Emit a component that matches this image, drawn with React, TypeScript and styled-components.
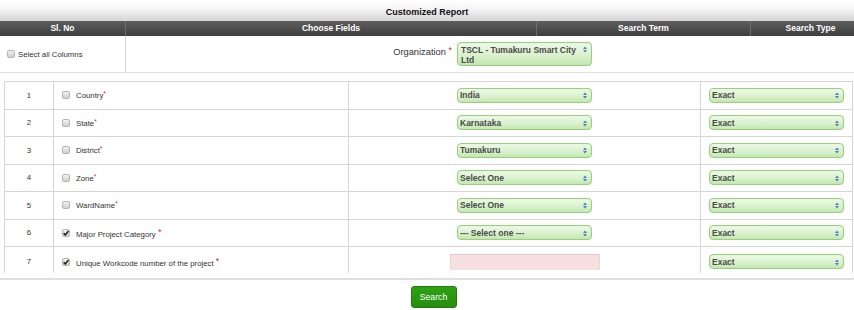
import React from 'react';
import styled, { createGlobalStyle } from 'styled-components';

const GlobalStyle = createGlobalStyle`
  html, body {
    margin: 0;
    padding: 0;
    background: #ffffff;
    font-family: "Liberation Sans", Arial, sans-serif;
    color: #333;
  }
`;

type Row = {
  no: number;
  label: string;
  checked: boolean;
  spacedStar: boolean;
  term: string | null;
};

const ROWS: Row[] = [
  { no: 1, label: 'Country', checked: false, spacedStar: false, term: 'India' },
  { no: 2, label: 'State', checked: false, spacedStar: false, term: 'Karnataka' },
  { no: 3, label: 'District', checked: false, spacedStar: false, term: 'Tumakuru' },
  { no: 4, label: 'Zone', checked: false, spacedStar: false, term: 'Select One' },
  { no: 5, label: 'WardName', checked: false, spacedStar: false, term: 'Select One' },
  { no: 6, label: 'Major Project Category', checked: true, spacedStar: true, term: '--- Select one ---' },
  { no: 7, label: 'Unique Workcode number of the project', checked: true, spacedStar: true, term: null },
];

const Arrows: React.FC = () => (
  <ArrowSvg width="4" height="7" viewBox="0 0 4 7">
    <polygon points="0,3 2,0.6 4,3" fill="#4a7cc0" />
    <polygon points="0,4 2,6.4 4,4" fill="#4a7cc0" />
  </ArrowSvg>
);

const Check: React.FC<{ checked?: boolean }> = ({ checked }) => (
  <Box>
    {checked && (
      <svg width="8" height="8" viewBox="0 0 8 8">
        <path d="M1.6 4.2 L3.3 5.9 L6.5 2" stroke="#1e1e1e" strokeWidth="1.5" fill="none" />
      </svg>
    )}
  </Box>
);

const FakeSelect: React.FC<{ value: string; tall?: boolean }> = ({ value, tall }) => (
  <SelectBox $tall={tall}>
    <SelectText>{value}</SelectText>
    <Arrows />
  </SelectBox>
);

const App: React.FC = () => {
  return (
    <>
      <GlobalStyle />
      <Page>
        <TitleBar>Customized Report</TitleBar>
        <HeadRow>
          <HeadCell>Sl. No</HeadCell>
          <HeadCell>Choose Fields</HeadCell>
          <HeadCell>Search Term</HeadCell>
          <HeadCell $last>Search Type</HeadCell>
        </HeadRow>
        <TopSection>
          <SelectAll>
            <Check />
            <span>Select all Columns</span>
          </SelectAll>
          <OrgCell>
            <OrgLabel>
              Organization <Star>*</Star>
            </OrgLabel>
            <FakeSelect value="TSCL - Tumakuru Smart City Ltd" tall />
          </OrgCell>
        </TopSection>

        <Table>
          {ROWS.map((row) => (
            <TableRow key={row.no} $tall={row.no === 7}>
              <NoCell>{row.no}</NoCell>
              <FieldCell>
                <Check checked={row.checked} />
                <FieldLabel>
                  {row.label}
                  {row.spacedStar ? (
                    <>
                      {' '}
                      <Star>*</Star>
                    </>
                  ) : (
                    <SmallStar>*</SmallStar>
                  )}
                </FieldLabel>
              </FieldCell>
              <TermCell>
                {row.term ? <FakeSelect value={row.term} /> : <TextInput />}
              </TermCell>
              <TypeCell>
                <FakeSelect value="Exact" />
              </TypeCell>
            </TableRow>
          ))}
        </Table>

        <Footer>
          <SearchButton>Search</SearchButton>
        </Footer>
      </Page>
    </>
  );
};

export default App;

const Page = styled.div`
  width: 854px;
  height: 310px;
  overflow: hidden;
`;

const TitleBar = styled.div`
  height: 21px;
  line-height: 25px;
  text-align: center;
  font-size: 9px;
  font-weight: bold;
  color: #111;
  background: linear-gradient(#ffffff, #f6f6f6 40%, #d4d4d4);
`;

const HeadRow = styled.div`
  display: grid;
  grid-template-columns: 126px 411px 214px 1fr;
  height: 15px;
  background: linear-gradient(#5e5e5e, #3e3e3e);
`;

const HeadCell = styled.div<{ $last?: boolean }>`
  color: #fff;
  font-size: 8.5px;
  font-weight: bold;
  text-align: center;
  line-height: 15px;
  padding-left: ${(p) => (p.$last ? '16px' : '0')};
  border-right: ${(p) => (p.$last ? 'none' : '1px solid #6c6c6c')};
`;

const TopSection = styled.div`
  display: grid;
  grid-template-columns: 126px 1fr;
  height: 37px;
  border-bottom: 1px solid #dedede;
  box-sizing: border-box;
`;

const SelectAll = styled.label`
  display: flex;
  align-items: center;
  gap: 3px;
  padding-left: 7px;
  font-size: 7.8px;
  color: #333;
  border-right: 1px solid #d6d6d6;
`;

const OrgCell = styled.div`
  display: flex;
  align-items: flex-start;
  padding-top: 6px;
`;

const OrgLabel = styled.div`
  width: 331px;
  text-align: right;
  font-size: 9.3px;
  color: #333;
  padding-top: 3px;
  padding-right: 5px;
  box-sizing: border-box;
`;

const Star = styled.span`
  color: #e02424;
  font-size: 9px;
  vertical-align: 2px;
`;

const SmallStar = styled.span`
  color: #e02424;
  font-size: 6.5px;
  vertical-align: 2px;
`;

const SelectBox = styled.div<{ $tall?: boolean }>`
  width: 135px;
  height: ${(p) => (p.$tall ? '24px' : '15px')};
  box-sizing: border-box;
  display: flex;
  align-items: ${(p) => (p.$tall ? 'flex-start' : 'center')};
  justify-content: space-between;
  padding: ${(p) => (p.$tall ? '2px 4px 0 3px' : '0 4px 0 2px')};
  border: 1px solid #96d17c;
  border-radius: 4px;
  background: linear-gradient(#eef9e8, #dcf2d0 50%, #c4e8b2);
  box-shadow: inset 0 0 1px #b8e2a4;
`;

const SelectText = styled.span`
  font-size: 8.5px;
  font-weight: bold;
  color: #4a4a4a;
  line-height: 10px;
  max-width: 120px;
`;

const ArrowSvg = styled.svg`
  flex: none;
  margin-top: 1px;
`;

const Table = styled.div`
  margin: 8px 1px 0 4px;
  height: 192px;
  overflow: hidden;
  border-top: 1px solid #d6d6d6;
  border-left: 1px solid #d6d6d6;
  border-right: 1px solid #d6d6d6;
  box-sizing: border-box;
`;

const TableRow = styled.div<{ $tall?: boolean }>`
  display: grid;
  grid-template-columns: 49px 295px 352px 1fr;
  height: ${(p) => (p.$tall ? '30px' : '27.5px')};
  border-bottom: 1px solid #d6d6d6;
  box-sizing: border-box;
`;

const NoCell = styled.div`
  display: flex;
  align-items: center;
  justify-content: center;
  font-size: 7.8px;
  color: #333;
  border-right: 1px solid #d6d6d6;
`;

const FieldCell = styled.div`
  display: flex;
  align-items: center;
  gap: 6px;
  padding-left: 8px;
  border-right: 1px solid #d6d6d6;
`;

const FieldLabel = styled.span`
  font-size: 7.8px;
  color: #333;
`;

const TermCell = styled.div`
  display: flex;
  align-items: center;
  justify-content: center;
  border-right: 1px solid #d6d6d6;
`;

const TypeCell = styled.div`
  display: flex;
  align-items: center;
  justify-content: center;
`;

const TextInput = styled.div`
  width: 150px;
  height: 16px;
  box-sizing: border-box;
  background: #f6e0e0;
  border-top: 1px solid #ecc9c9;
  border-left: 1px solid #f0d4d4;
  border-right: 1px solid #f0d4d4;
`;

const Box = styled.span`
  flex: none;
  width: 8px;
  height: 8px;
  box-sizing: border-box;
  border: 1px solid #b4b4b4;
  border-radius: 2px;
  background: linear-gradient(#f2f2f2, #cfcfcf);
  display: inline-flex;
  align-items: center;
  justify-content: center;
  svg {
    margin: -1px;
  }
`;

const Footer = styled.div`
  margin-top: 5px;
  border-top: 2px solid #e0e0e0;
  padding-top: 6px;
  display: flex;
  justify-content: center;
  padding-left: 13px;
`;

const SearchButton = styled.button`
  width: 46px;
  height: 22px;
  padding: 0;
  border: 1px solid #1f7e0b;
  border-radius: 3px;
  background: linear-gradient(#2fa114, #278d0f);
  color: #fff;
  font-family: "Liberation Sans", Arial, sans-serif;
  font-size: 8.7px;
`;
